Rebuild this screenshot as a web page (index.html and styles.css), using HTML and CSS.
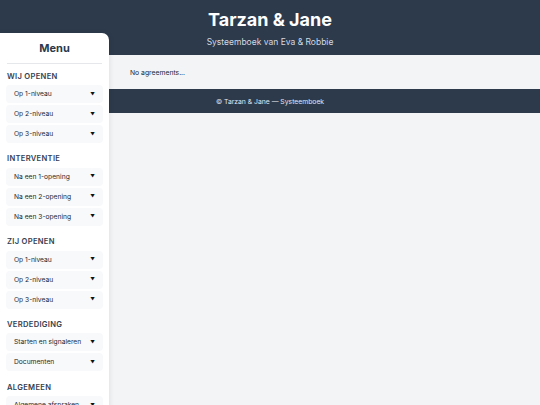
FILE: index.html
```html
<!DOCTYPE html>
<html lang="nl">
<head>
<meta charset="utf-8">
<title>Tarzan &amp; Jane</title>
<link rel="stylesheet" href="styles.css">
</head>
<body>
<header class="site-header">
  <h1 class="site-title">Tarzan &amp; Jane</h1>
  <p class="site-subtitle">Systeemboek van Eva &amp; Robbie</p>
</header>
<main class="content">
  <p class="empty">No agreements...</p>
</main>
<footer class="site-footer">© Tarzan &amp; Jane — Systeemboek</footer>

<nav class="sidebar">
  <div class="menu-title">Menu</div>
  <section class="menu-section">
    <h2 class="menu-heading">WIJ OPENEN</h2>
    <div class="menu-item"><span>Op 1-niveau</span><span class="arrow">▼</span></div>
    <div class="menu-item"><span>Op 2-niveau</span><span class="arrow">▼</span></div>
    <div class="menu-item"><span>Op 3-niveau</span><span class="arrow">▼</span></div>
  </section>
  <section class="menu-section">
    <h2 class="menu-heading">INTERVENTIE</h2>
    <div class="menu-item"><span>Na een 1-opening</span><span class="arrow">▼</span></div>
    <div class="menu-item"><span>Na een 2-opening</span><span class="arrow">▼</span></div>
    <div class="menu-item"><span>Na een 3-opening</span><span class="arrow">▼</span></div>
  </section>
  <section class="menu-section">
    <h2 class="menu-heading">ZIJ OPENEN</h2>
    <div class="menu-item"><span>Op 1-niveau</span><span class="arrow">▼</span></div>
    <div class="menu-item"><span>Op 2-niveau</span><span class="arrow">▼</span></div>
    <div class="menu-item"><span>Op 3-niveau</span><span class="arrow">▼</span></div>
  </section>
  <section class="menu-section">
    <h2 class="menu-heading">VERDEDIGING</h2>
    <div class="menu-item"><span>Starten en signaleren</span><span class="arrow">▼</span></div>
    <div class="menu-item"><span>Documenten</span><span class="arrow">▼</span></div>
  </section>
  <section class="menu-section">
    <h2 class="menu-heading">ALGEMEEN</h2>
    <div class="menu-item"><span>Algemene afspraken</span><span class="arrow">▼</span></div>
  </section>
</nav>
</body>
</html>
```

FILE: styles.css
```css
* { box-sizing: border-box; }

html, body {
  margin: 0;
  padding: 0;
}

body {
  background: #f3f4f6;
  font-family: Inter, "Liberation Sans", sans-serif;
  color: #1f2937;
  height: 405px;
  overflow: hidden;
  position: relative;
}

.site-header {
  background: #2c3a4c;
  height: 55px;
  text-align: center;
  padding-top: 9px;
}

.site-title {
  margin: 0;
  font-size: 18px;
  line-height: 22px;
  font-weight: 700;
  color: #ffffff;
}

.site-subtitle {
  margin: 4.5px 0 0;
  font-size: 8.5px;
  line-height: 12px;
  color: #d3d9e1;
}

.content {
  height: 34px;
  padding-left: 130px;
  display: flex;
  align-items: center;
  background: #f3f4f6;
}

.empty {
  margin: 0;
  font-size: 6.8px;
  color: #222831;
}

.site-footer {
  background: #2c3a4c;
  height: 24px;
  display: flex;
  align-items: center;
  justify-content: center;
  font-size: 6.8px;
  color: #e2e6ec;
}

.sidebar {
  position: absolute;
  left: 0;
  top: 33px;
  width: 109px;
  height: 380px;
  background: #ffffff;
  border-radius: 0 7px 0 0;
  box-shadow: 1px 0 5px rgba(0, 0, 0, 0.08);
  padding: 8px 6px 0;
}

.menu-title {
  font-size: 11px;
  line-height: 14px;
  font-weight: 700;
  color: #2c3a4c;
  text-align: center;
  padding-bottom: 8px;
  margin: 0 1px;
  border-bottom: 1px solid #e5e7eb;
}

.menu-section {
  margin-top: 6.5px;
}

.menu-section + .menu-section {
  margin-top: 10.3px;
}

.menu-heading {
  margin: 0 0 3.5px 1px;
  font-size: 7.6px;
  line-height: 11px;
  font-weight: 600;
  letter-spacing: 0.3px;
  color: #34404f;
}

.menu-item {
  height: 18px;
  margin-bottom: 2px;
  background: #f8f9fa;
  border-radius: 4px;
  padding: 0 8px 0 8px;
  display: flex;
  align-items: center;
  justify-content: space-between;
  font-size: 6.7px;
  color: #222831;
}

.arrow {
  font-size: 4.6px;
  color: #111111;
}
```
